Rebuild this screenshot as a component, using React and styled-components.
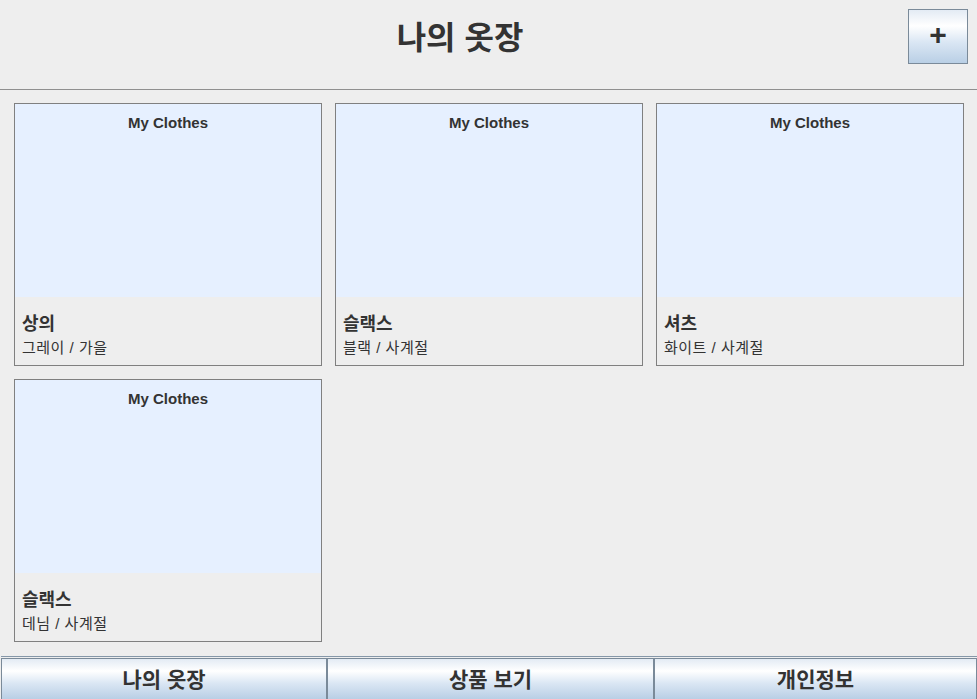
import React from "react";
import styled, { createGlobalStyle } from "styled-components";

const clothes = [
    { name: "상의", detail: "그레이 / 가을" },
    { name: "슬랙스", detail: "블랙 / 사계절" },
    { name: "셔츠", detail: "화이트 / 사계절" },
    { name: "슬랙스", detail: "데님 / 사계절" },
];

const tabs = ["나의 옷장", "상품 보기", "개인정보"];

export default function App() {
    return (
        <>
            <GlobalStyle />
            <Page>
                <Header>
                    <Title>나의 옷장</Title>
                    <AddButton type="button">+</AddButton>
                </Header>
                <Main>
                    <Grid>
                        {clothes.map((item, i) => (
                            <Card key={i}>
                                <Thumb>My Clothes</Thumb>
                                <Info>
                                    <Name>{item.name}</Name>
                                    <Detail>{item.detail}</Detail>
                                </Info>
                            </Card>
                        ))}
                    </Grid>
                </Main>
                <Footer>
                    {tabs.map((t) => (
                        <TabButton key={t} type="button">
                            {t}
                        </TabButton>
                    ))}
                </Footer>
            </Page>
        </>
    );
}

const GlobalStyle = createGlobalStyle`
    html, body {
        margin: 0;
        padding: 0;
        background: #eeeeee;
        font-family: "Liberation Sans", "Noto Sans CJK KR", sans-serif;
        color: #333333;
    }
    * {
        box-sizing: border-box;
    }
`;

const Page = styled.div`
    height: 100vh;
    display: flex;
    flex-direction: column;
    overflow: hidden;
`;

const Header = styled.header`
    height: 90px;
    flex-shrink: 0;
    display: flex;
    align-items: flex-start;
    border-bottom: 1px solid #8f8f8f;
`;

const Title = styled.h1`
    flex: 1;
    margin: 0;
    padding: 16px 0 0 12px;
    line-height: 44px;
    text-align: center;
    font-size: 32px;
    font-weight: bold;
    color: #333333;
`;

const blueGradient = `
    background: linear-gradient(
        to bottom,
        #e3ebf4 0%,
        #ffffff 30%,
        #dbe7f4 60%,
        #b9cfe5 100%
    );
`;

const AddButton = styled.button`
    margin: 9px 9px 0 0;
    width: 60px;
    height: 55px;
    border: 1px solid #7a8a99;
    ${blueGradient}
    font-family: "Liberation Sans", sans-serif;
    font-size: 30px;
    font-weight: bold;
    line-height: 1;
    color: #333333;
    padding: 0 0 3px;
    cursor: pointer;
`;

const Main = styled.main`
    flex: 1;
    padding: 13px 13px 0 14px;
`;

const Grid = styled.div`
    display: grid;
    grid-template-columns: repeat(3, 1fr);
    column-gap: 13px;
    row-gap: 13px;
`;

const Card = styled.div`
    height: 263px;
    border: 1px solid #808080;
    display: flex;
    flex-direction: column;
`;

const Thumb = styled.div`
    height: 193px;
    background: #e6f0ff;
    text-align: center;
    padding-top: 10px;
    line-height: 18px;
    font-size: 15px;
    font-weight: bold;
    color: #333333;
`;

const Info = styled.div`
    flex: 1;
    padding: 16px 7px 0;
    display: flex;
    flex-direction: column;
    gap: 4px;
`;

const Name = styled.div`
    font-size: 18px;
    line-height: 22px;
    font-weight: bold;
    color: #333333;
`;

const Detail = styled.div`
    font-size: 15px;
    line-height: 18px;
    letter-spacing: 0.5px;
    color: #333333;
`;

const Footer = styled.nav`
    height: 43px;
    flex-shrink: 0;
    margin-left: 1px;
    border-top: 1px solid #8597a8;
    padding-top: 1px;
    display: grid;
    grid-template-columns: 326px 327px 1fr;
`;

const TabButton = styled.button`
    border: 1px solid #7a8a99;
    border-bottom: none;
    ${blueGradient}
    font-family: "Liberation Sans", "Noto Sans CJK KR", sans-serif;
    font-size: 21px;
    font-weight: bold;
    color: #333333;
    padding: 0 0 2px;
    cursor: pointer;
`;
